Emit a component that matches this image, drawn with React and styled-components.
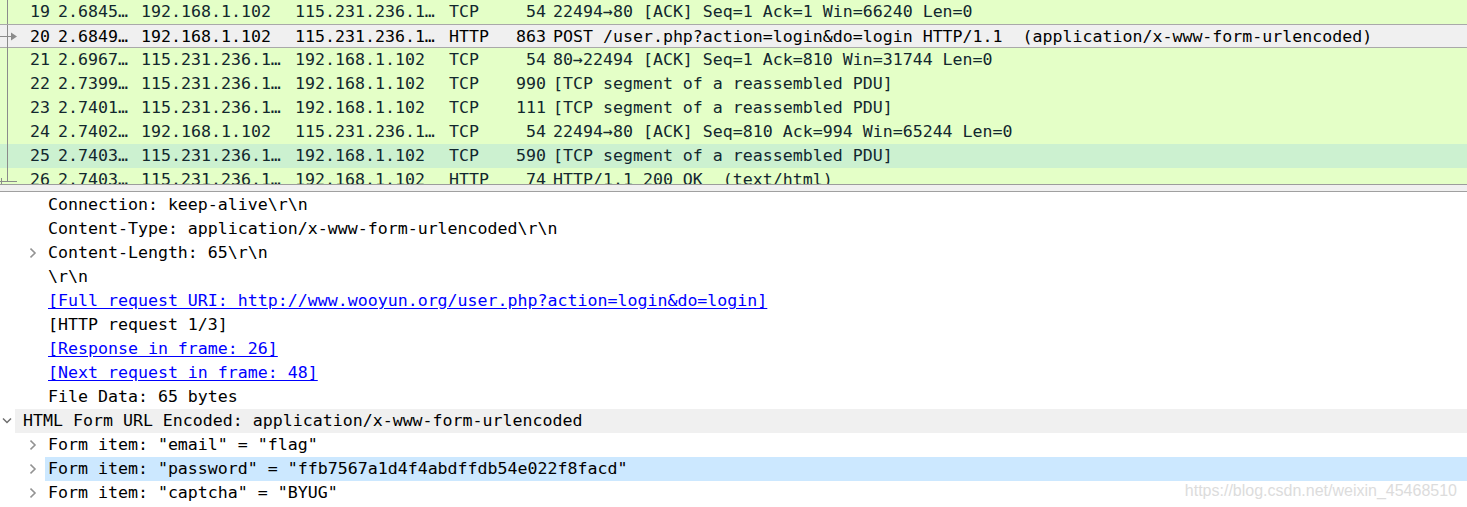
import React from 'react';
import styled, { createGlobalStyle } from 'styled-components';

const Global = createGlobalStyle`
  html, body {
    margin: 0;
    padding: 0;
    background: #ffffff;
  }
  body {
    font-family: "DejaVu Sans Mono", "Liberation Mono", monospace;
    font-size: 16.6px;
  }
`;

const Page = styled.div`
  position: relative;
  width: 1467px;
  height: 507px;
  overflow: hidden;
  background: #ffffff;
`;

const PacketList = styled.div`
  height: 184px;
  overflow: hidden;
  border-bottom: 1px solid #9c9c9c;
`;

const PacketRow = styled.div`
  display: grid;
  grid-template-columns: 20px 34px 83px 154px 154px 55px 50px 1fr;
  height: 24px;
  line-height: 24px;
  box-sizing: border-box;
  color: ${p => (p.$selected ? '#000000' : '#12272e')};
  background: ${p => (p.$selected ? '#f0f0f0' : p.$hover ? '#ccf1d0' : '#e4ffc7')};
  border-top: ${p => (p.$selected ? '1px solid #a9a9a9' : 'none')};
  border-bottom: ${p => (p.$selected ? '1px solid #a9a9a9' : 'none')};
  white-space: pre;
`;

const Cell = styled.div`
  overflow: hidden;
  padding: ${p => (p.$right ? '0 4px 0 0' : '0 0 0 4px')};
  text-align: ${p => (p.$right ? 'right' : 'left')};
`;

const InfoCell = styled.div`
  padding-left: 3px;
  overflow: hidden;
`;

const Marker = styled.div`
  height: 100%;
  svg {
    display: block;
  }
`;

const Splitter = styled.div`
  height: 6px;
  background: #f0f0f0;
  border-bottom: 1px solid #a0a0a0;
`;

const Details = styled.div`
  padding-top: 1px;
`;

const TreeRow = styled.div`
  display: flex;
  height: 24px;
  line-height: 24px;
  padding-left: ${p => p.$level * 30}px;
  color: #000000;
  white-space: pre;
`;

const Toggle = styled.div`
  width: 15px;
  flex: none;
  display: flex;
  align-items: center;
  svg {
    display: block;
  }
`;

const Label = styled.div`
  flex: 1;
  padding-left: ${p => (p.$level === 0 ? 8 : 3)}px;
  background: ${p => (p.$selected ? '#cce8ff' : p.$header ? '#f0f0f0' : 'transparent')};
`;

const Link = styled.span`
  color: #0000ff;
  text-decoration: underline;
  text-underline-offset: 2px;
`;

const Watermark = styled.div`
  position: absolute;
  right: 10px;
  bottom: 7px;
  font-family: "Liberation Sans", Arial, sans-serif;
  font-size: 16px;
  color: #dcdcdc;
`;

const grey = '#8b8b8b';

const RelMarker = ({ kind }) => (
  <Marker>
    <svg width="20" height="24" viewBox="0 0 20 24">
      {kind === 'end' ? (
        <>
          <line x1="7.5" y1="0" x2="7.5" y2="13" stroke={grey} strokeWidth="1" />
          <line x1="0" y1="13.5" x2="17" y2="13.5" stroke={grey} strokeWidth="1" />
          <line x1="1.5" y1="10" x2="1.5" y2="17" stroke={grey} strokeWidth="1" />
        </>
      ) : (
        <line x1="7.5" y1="0" x2="7.5" y2="24" stroke={grey} strokeWidth="1" />
      )}
      {kind === 'arrow' && (
        <>
          <line x1="0" y1="11.5" x2="12" y2="11.5" stroke={grey} strokeWidth="1" />
          <polygon points="11,7.5 17,11.5 11,15.5" fill={grey} />
        </>
      )}
    </svg>
  </Marker>
);

const Chevron = ({ open }) => (
  <svg width="15" height="12" viewBox="0 0 15 12">
    {open ? (
      <polyline points="3,3.5 7,7.5 11,3.5" fill="none" stroke="#6f6f6f" strokeWidth="1.5" />
    ) : (
      <polyline points="0.5,1.5 5,6 0.5,10.5" fill="none" stroke="#939393" strokeWidth="1.6" />
    )}
  </svg>
);

const packets = [
  { no: 19, time: '2.6845…', src: '192.168.1.102', dst: '115.231.236.1…', proto: 'TCP', len: 54, info: '22494→80 [ACK] Seq=1 Ack=1 Win=66240 Len=0', mark: 'line' },
  { no: 20, time: '2.6849…', src: '192.168.1.102', dst: '115.231.236.1…', proto: 'HTTP', len: 863, info: 'POST /user.php?action=login&do=login HTTP/1.1  (application/x-www-form-urlencoded)', mark: 'arrow', selected: true },
  { no: 21, time: '2.6967…', src: '115.231.236.1…', dst: '192.168.1.102', proto: 'TCP', len: 54, info: '80→22494 [ACK] Seq=1 Ack=810 Win=31744 Len=0', mark: 'line' },
  { no: 22, time: '2.7399…', src: '115.231.236.1…', dst: '192.168.1.102', proto: 'TCP', len: 990, info: '[TCP segment of a reassembled PDU]', mark: 'line' },
  { no: 23, time: '2.7401…', src: '115.231.236.1…', dst: '192.168.1.102', proto: 'TCP', len: 111, info: '[TCP segment of a reassembled PDU]', mark: 'line' },
  { no: 24, time: '2.7402…', src: '192.168.1.102', dst: '115.231.236.1…', proto: 'TCP', len: 54, info: '22494→80 [ACK] Seq=810 Ack=994 Win=65244 Len=0', mark: 'line' },
  { no: 25, time: '2.7403…', src: '115.231.236.1…', dst: '192.168.1.102', proto: 'TCP', len: 590, info: '[TCP segment of a reassembled PDU]', mark: 'line', hover: true },
  { no: 26, time: '2.7403…', src: '115.231.236.1…', dst: '192.168.1.102', proto: 'HTTP', len: 74, info: 'HTTP/1.1 200 OK  (text/html)', mark: 'end' },
];

const tree = [
  { level: 1, text: 'Connection: keep-alive\\r\\n' },
  { level: 1, text: 'Content-Type: application/x-www-form-urlencoded\\r\\n' },
  { level: 1, text: 'Content-Length: 65\\r\\n', toggle: 'closed' },
  { level: 1, text: '\\r\\n' },
  { level: 1, text: '[Full request URI: http://www.wooyun.org/user.php?action=login&do=login]', link: true },
  { level: 1, text: '[HTTP request 1/3]' },
  { level: 1, text: '[Response in frame: 26]', link: true },
  { level: 1, text: '[Next request in frame: 48]', link: true },
  { level: 1, text: 'File Data: 65 bytes' },
  { level: 0, text: 'HTML Form URL Encoded: application/x-www-form-urlencoded', toggle: 'open', header: true },
  { level: 1, text: 'Form item: "email" = "flag"', toggle: 'closed' },
  { level: 1, text: 'Form item: "password" = "ffb7567a1d4f4abdffdb54e022f8facd"', toggle: 'closed', selected: true },
  { level: 1, text: 'Form item: "captcha" = "BYUG"', toggle: 'closed' },
];

export default function App() {
  return (
    <Page>
      <Global />
      <PacketList>
        {packets.map(p => (
          <PacketRow key={p.no} $selected={p.selected} $hover={p.hover}>
            <RelMarker kind={p.mark} />
            <Cell $right>{p.no}</Cell>
            <Cell>{p.time}</Cell>
            <Cell>{p.src}</Cell>
            <Cell>{p.dst}</Cell>
            <Cell>{p.proto}</Cell>
            <Cell $right>{p.len}</Cell>
            <InfoCell>{p.info}</InfoCell>
          </PacketRow>
        ))}
      </PacketList>
      <Splitter />
      <Details>
        {tree.map((t, i) => (
          <TreeRow key={i} $level={t.level}>
            <Toggle>{t.toggle && <Chevron open={t.toggle === 'open'} />}</Toggle>
            <Label $level={t.level} $header={t.header} $selected={t.selected}>
              {t.link ? <Link>{t.text}</Link> : t.text}
            </Label>
          </TreeRow>
        ))}
      </Details>
      <Watermark>https://blog.csdn.net/weixin_45468510</Watermark>
    </Page>
  );
}
